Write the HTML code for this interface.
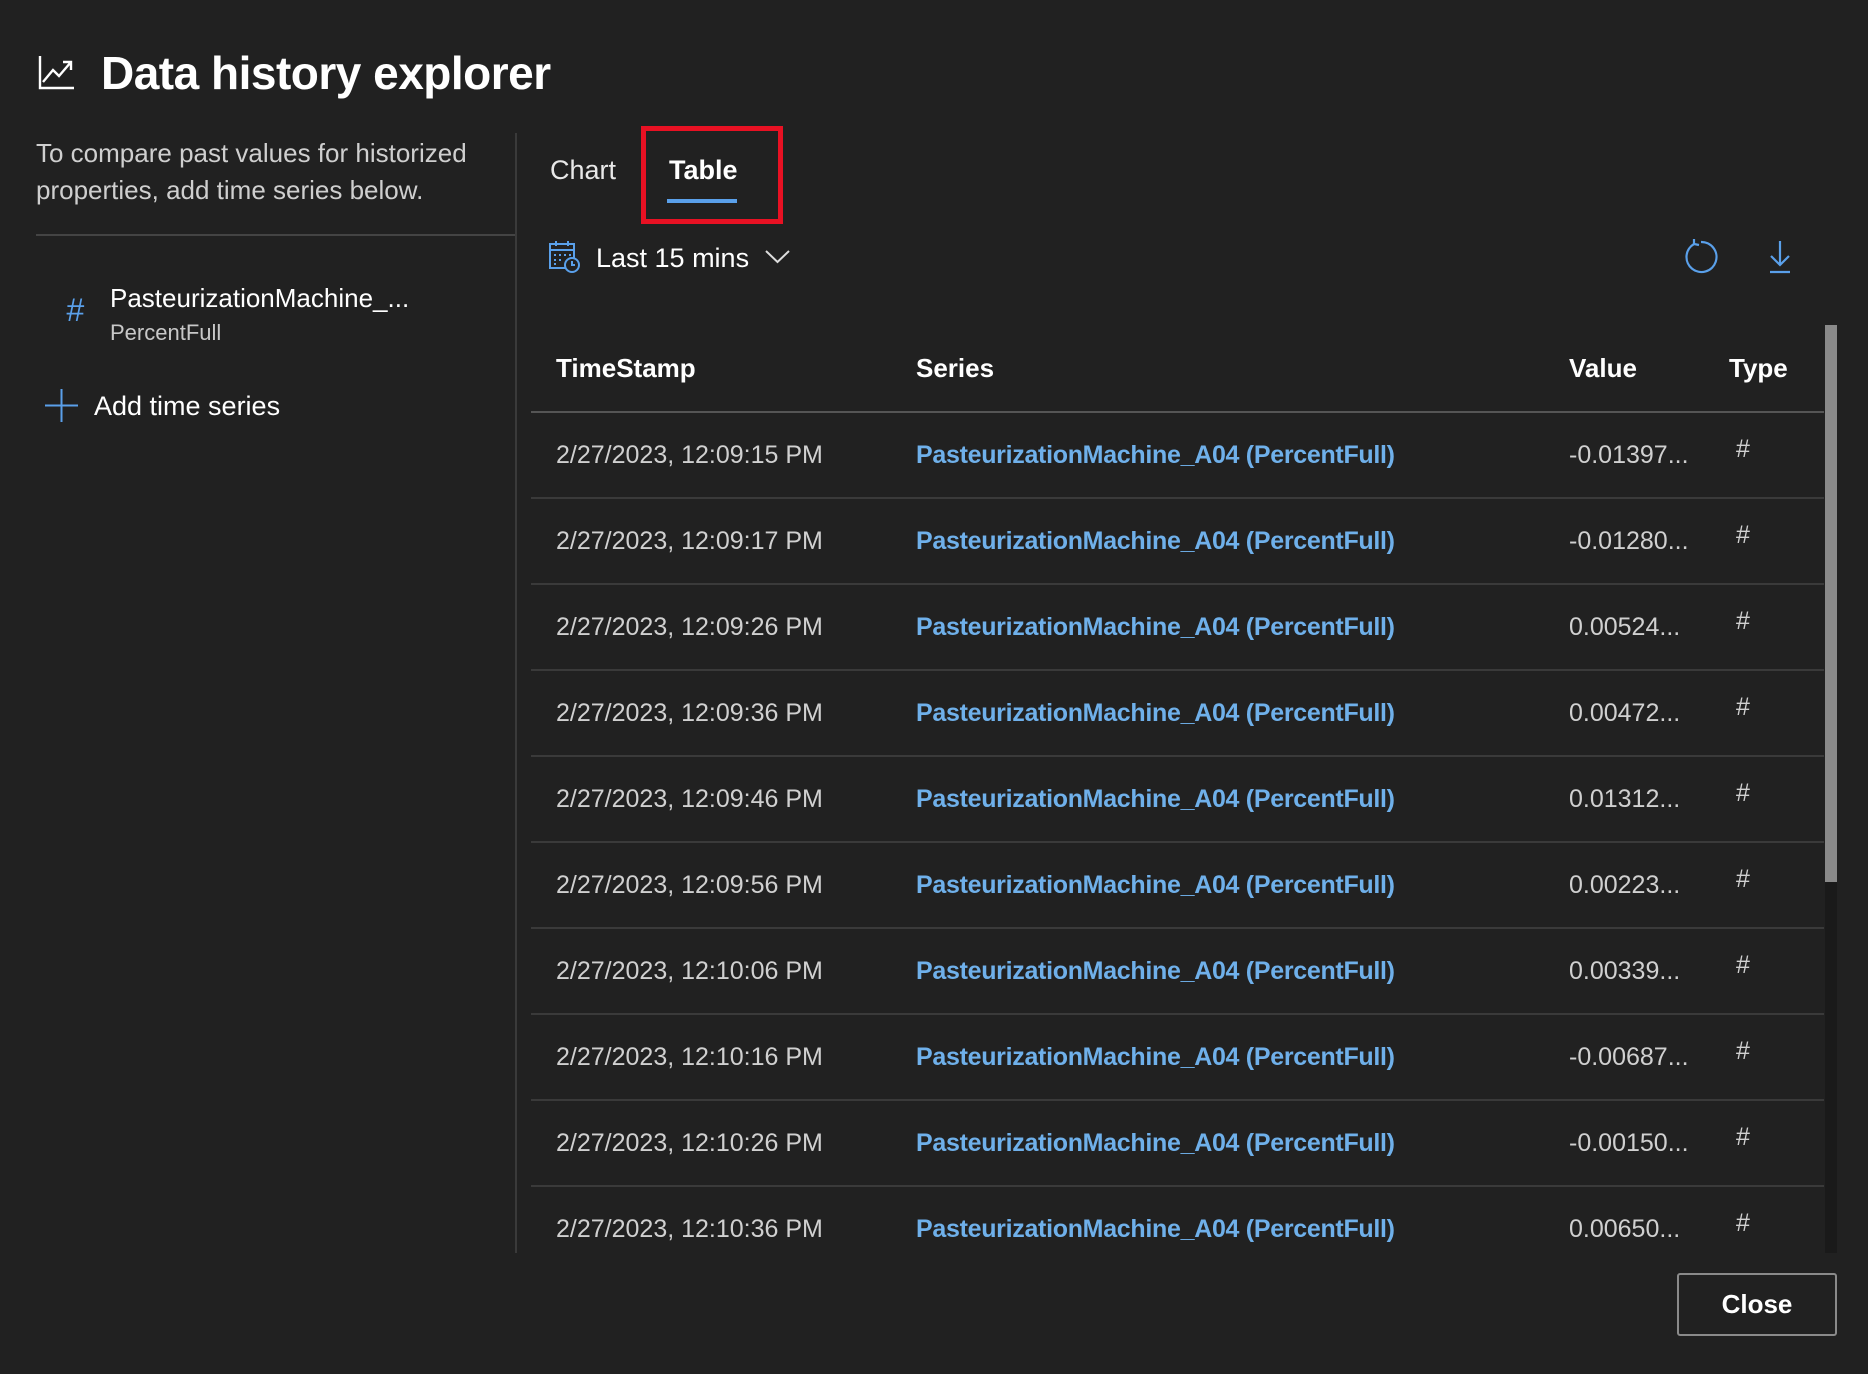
<!DOCTYPE html>
<html><head><meta charset="utf-8"><style>
*{margin:0;padding:0;box-sizing:border-box}
body{width:1868px;height:1374px;background:#212121;font-family:"Liberation Sans",sans-serif;color:#fff;position:relative;overflow:hidden}
.a{position:absolute;white-space:nowrap}
.row{position:absolute;left:531px;width:1293px;height:86px;border-top:2px solid #3a3a3a}
.row span{position:absolute;top:28px;font-size:25px}
.ts{left:25px;color:#d0d0d0}
.sr{left:385px;color:#6fb0ea;font-weight:bold;letter-spacing:-0.3px}
.vl{left:1038px;color:#d0d0d0}
.ty{left:1205px;color:#d0d0d0;top:22px!important}
</style></head><body>
<svg class="a" style="left:38px;top:54px" width="38" height="36" viewBox="0 0 38 36" fill="none" stroke="#fff" stroke-width="2.4"><path d="M2 2V34H36"/><path d="M5 28L15 16L21 22L33 8M25 8H33V16"/></svg>
<div class="a" style="left:101px;top:46px;font-size:46px;font-weight:bold;letter-spacing:-0.5px">Data history explorer</div>
<div class="a" style="left:36px;top:135px;font-size:26px;line-height:37px;color:#cfcfcf">To compare past values for historized<br>properties, add time series below.</div>
<div class="a" style="left:36px;top:234px;width:479px;height:2px;background:#444"></div>
<div class="a" style="left:515px;top:133px;width:2px;height:1120px;background:#3a3a3a"></div>
<div class="a" style="left:66px;top:292px;font-size:32px;color:#5aa0ea;font-style:italic">#</div>
<div class="a" style="left:110px;top:283px;font-size:26px">PasteurizationMachine_...</div>
<div class="a" style="left:110px;top:320px;font-size:22px;color:#c8c8c8">PercentFull</div>
<svg class="a" style="left:45px;top:389px" width="33" height="33" viewBox="0 0 33 33" stroke="#5aa0ea" stroke-width="2"><path d="M16.5 0V33M0 16.5H33"/></svg>
<div class="a" style="left:94px;top:391px;font-size:27px">Add time series</div>
<div class="a" style="left:550px;top:155px;font-size:27px;color:#e8e8e8">Chart</div>
<div class="a" style="left:669px;top:155px;font-size:27px;font-weight:bold">Table</div>
<div class="a" style="left:667px;top:199px;width:70px;height:4px;background:#5aa0ea"></div>
<div class="a" style="left:641px;top:126px;width:142px;height:98px;border:5px solid #e81123"></div>
<svg class="a" style="left:549px;top:240px" width="32" height="34" viewBox="0 0 32 34" fill="none" stroke="#5aa0ea" stroke-width="2"><rect x="1" y="4" width="24" height="24"/><path d="M1 10H25M7 1V6M19 1V6M5 15h2M10 15h2M15 15h2M20 15h2M5 20h2M10 20h2M5 24h2"/><circle cx="23" cy="25" r="7" fill="#212121"/><path d="M23 21V25H26"/></svg>
<div class="a" style="left:596px;top:243px;font-size:27px">Last 15 mins</div>
<svg class="a" style="left:765px;top:250px" width="25" height="14" viewBox="0 0 25 14" fill="none" stroke="#ddd" stroke-width="2"><path d="M1 1L12.5 12L24 1"/></svg>
<svg class="a" style="left:1683px;top:239px" width="36" height="36" viewBox="0 0 36 36" fill="none" stroke="#5aa0ea" stroke-width="2.2"><path d="M11 5A15 15 0 1 0 18 3"/><path d="M11 0L11 5L16 6"/></svg>
<svg class="a" style="left:1767px;top:240px" width="26" height="34" viewBox="0 0 26 34" fill="none" stroke="#5aa0ea" stroke-width="2.2"><path d="M13 1V25M4 16L13 25L22 16M3 32H23"/></svg>
<div class="a" style="left:556px;top:353px;font-size:26px;font-weight:bold">TimeStamp</div>
<div class="a" style="left:916px;top:353px;font-size:26px;font-weight:bold">Series</div>
<div class="a" style="left:1569px;top:353px;font-size:26px;font-weight:bold">Value</div>
<div class="a" style="left:1729px;top:353px;font-size:26px;font-weight:bold">Type</div>
<div class="a" style="left:1825px;top:325px;width:12px;height:928px;background:#1a1a1a"></div>
<div class="a" style="left:1825px;top:325px;width:12px;height:557px;background:#8a8a8a"></div>
<div class="row" style="top:411px;border-top-color:#555"><span class="ts">2/27/2023, 12:09:15 PM</span><span class="sr">PasteurizationMachine_A04 (PercentFull)</span><span class="vl">-0.01397...</span><span class="ty">#</span></div>
<div class="row" style="top:497px"><span class="ts">2/27/2023, 12:09:17 PM</span><span class="sr">PasteurizationMachine_A04 (PercentFull)</span><span class="vl">-0.01280...</span><span class="ty">#</span></div>
<div class="row" style="top:583px"><span class="ts">2/27/2023, 12:09:26 PM</span><span class="sr">PasteurizationMachine_A04 (PercentFull)</span><span class="vl">0.00524...</span><span class="ty">#</span></div>
<div class="row" style="top:669px"><span class="ts">2/27/2023, 12:09:36 PM</span><span class="sr">PasteurizationMachine_A04 (PercentFull)</span><span class="vl">0.00472...</span><span class="ty">#</span></div>
<div class="row" style="top:755px"><span class="ts">2/27/2023, 12:09:46 PM</span><span class="sr">PasteurizationMachine_A04 (PercentFull)</span><span class="vl">0.01312...</span><span class="ty">#</span></div>
<div class="row" style="top:841px"><span class="ts">2/27/2023, 12:09:56 PM</span><span class="sr">PasteurizationMachine_A04 (PercentFull)</span><span class="vl">0.00223...</span><span class="ty">#</span></div>
<div class="row" style="top:927px"><span class="ts">2/27/2023, 12:10:06 PM</span><span class="sr">PasteurizationMachine_A04 (PercentFull)</span><span class="vl">0.00339...</span><span class="ty">#</span></div>
<div class="row" style="top:1013px"><span class="ts">2/27/2023, 12:10:16 PM</span><span class="sr">PasteurizationMachine_A04 (PercentFull)</span><span class="vl">-0.00687...</span><span class="ty">#</span></div>
<div class="row" style="top:1099px"><span class="ts">2/27/2023, 12:10:26 PM</span><span class="sr">PasteurizationMachine_A04 (PercentFull)</span><span class="vl">-0.00150...</span><span class="ty">#</span></div>
<div class="row" style="top:1185px;height:68px"><span class="ts">2/27/2023, 12:10:36 PM</span><span class="sr">PasteurizationMachine_A04 (PercentFull)</span><span class="vl">0.00650...</span><span class="ty">#</span></div>
<div class="a" style="left:1677px;top:1273px;width:160px;height:63px;border:2px solid #8a8a8a;border-radius:3px;font-size:26px;font-weight:bold;text-align:center;line-height:59px">Close</div>
</body></html>
